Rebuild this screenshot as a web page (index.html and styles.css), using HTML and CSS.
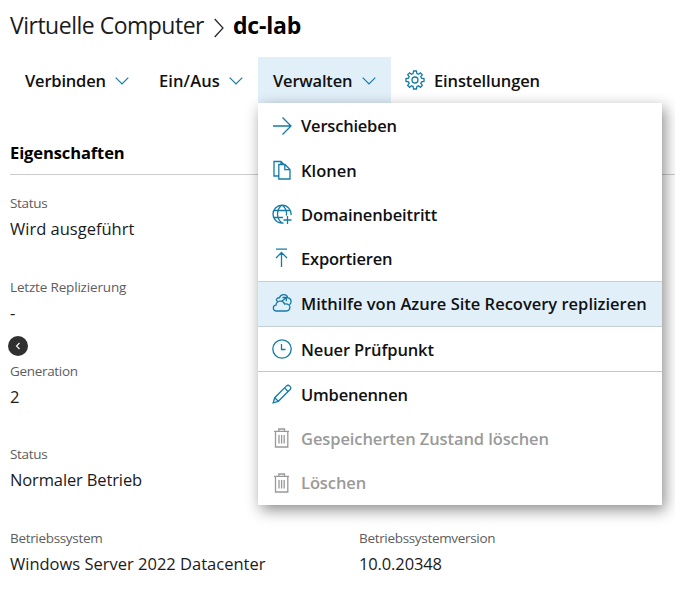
FILE: index.html
```html
<!DOCTYPE html>
<html lang="de">
<head>
<meta charset="utf-8">
<title>dc-lab</title>
<link rel="stylesheet" href="styles.css">
</head>
<body>
<main class="page">
  <header class="crumbs">
    <span class="crumb">Virtuelle Computer</span>
    <svg class="crumb-sep" viewBox="0 0 10 20"><path d="M0.7 1 9 10 0.7 19"/></svg>
    <span class="crumb-current">dc-lab</span>
  </header>
  <nav class="toolbar">
    <div class="tool tool-connect"><span class="snug">Verbinden</span><svg class="chevron" viewBox="0 0 14 8"><path d="M.7.7 7 7 13.300.7"/></svg></div>
    <div class="tool tool-power"><span class="loose">Ein/Aus</span><svg class="chevron" viewBox="0 0 14 8"><path d="M.7.7 7 7 13.300.7"/></svg></div>
    <div class="tool tool-manage"><span class="snug">Verwalten</span><svg class="chevron" viewBox="0 0 14 8"><path d="M.7.7 7 7 13.300.7"/></svg>
      <div class="menu">
        <div class="item"><svg class="icon" viewBox="0 0 20 20"><path d="M1 10H19M10.500 1.500 19 10 10.500 18.500"/></svg><span class="snug">Verschieben</span></div>
        <div class="item"><svg class="icon" viewBox="0 0 20 20"><path d="M6.500 16H2V1.500H9L11.500 4M6.800 4.500H13L18 9.500V19H6.800ZM12.800 4.500V9.700H18M9 1.500V4.500"/></svg><span>Klonen</span></div>
        <div class="item"><svg class="icon" viewBox="0 0 20 20"><path d="M11.500 19A9 9 0 1 1 19 11M10 1C4 5.500 4 14.500 10 19M10 1C14 4 15 8 14.300 11.500M2 6.500H18M2 13.500H11M15.500 12V20M11.500 16H19.500"/></svg><span class="trim">Domainenbeitritt</span></div>
        <div class="item"><svg class="icon" viewBox="0 0 20 20"><path d="M4 1.200H15M9.500 19V4.500M4 10 9.500 4.500 15 10"/></svg><span class="snug">Exportieren</span></div>
        <div class="item item-active"><svg class="icon" viewBox="0 0 20 20"><path d="M4.500 18C.500 18 .300 12.500 4 12.200 4.500 7.500 11 6.700 12.500 11 16.500 10.500 18.300 12.500 17.800 15 17.500 17 16 18 14.500 18ZM5.500 8.500C3.500 7.500 4.500 4.500 7.500 4.800 8.500 .8 15 .5 15.700 4.800 19.800 5 19.800 10 17.500 11.500M9.500 8.500 14 4.800M10.500 4.500H14.300V8.300"/></svg><span>Mithilfe von Azure Site Recovery replizieren</span></div>
        <div class="item item-ruled"><svg class="icon" viewBox="0 0 20 20"><circle cx="10" cy="10" r="9.200"/><path d="M9.500 5V10.500H13.500"/></svg><span class="trim">Neuer Prüfpunkt</span></div>
        <div class="item"><svg class="icon" viewBox="0 0 20 20"><path d="M1.200 18.800 2.700 13.700 14.500 1.900C16.700-.1 20.100 3.300 18.100 5.500L6.300 17.300ZM2.700 13.700 6.300 17.300M12.500 3.900 16.100 7.500"/></svg><span class="snug">Umbenennen</span></div>
        <div class="item item-disabled"><svg class="icon" viewBox="0 0 20 20"><path d="M2 3.300H17M3.500 3.300V19H15.800V3.300M6.800 3.300V1H12.500V3.300M7 7V15.500M9.600 7V15.500M12.200 7V15.500"/></svg><span class="slight">Gespeicherten Zustand löschen</span></div>
        <div class="item item-disabled"><svg class="icon" viewBox="0 0 20 20"><path d="M2 3.300H17M3.500 3.300V19H15.800V3.300M6.800 3.300V1H12.500V3.300M7 7V15.500M9.600 7V15.500M12.200 7V15.500"/></svg><span class="slight">Löschen</span></div>
      </div>
    </div>
    <div class="tool tool-settings"><svg class="icon" viewBox="0 0 20 20"><circle cx="10" cy="10" r="3"/><path d="M8.600 1H11.400L11.900 3.600 13.600 4.300 15.400 2.800 17.300 4.700 15.800 6.600 16.500 8.200 19 8.600V11.400L16.500 11.900 15.800 13.500 17.300 15.400 15.400 17.300 13.500 15.800 11.900 16.500 11.400 19H8.600L8.100 16.500 6.500 15.800 4.600 17.300 2.700 15.400 4.200 13.500 3.500 11.900 1 11.400V8.600L3.500 8.200 4.200 6.600 2.700 4.700 4.600 2.800 6.400 4.300 8.100 3.600Z"/></svg><span class="trim">Einstellungen</span></div>
  </nav>
  <section class="properties">
    <h2 class="heading">Eigenschaften</h2>
    <dl class="fields">
      <div class="field"><dt>Status</dt><dd>Wird ausgeführt</dd></div>
      <div class="field"><dt class="trim">Letzte Replizierung</dt><dd>-</dd>
        <button class="collapse" aria-label="Zurück"><svg viewBox="0 0 6 8"><path d="M4.500 1 1.500 4 4.500 7"/></svg></button></div>
      <div class="field"><dt>Generation</dt><dd>2</dd></div>
      <div class="field"><dt>Status</dt><dd class="trim">Normaler Betrieb</dd></div>
      <div class="field"><dt>Betriebssystem</dt><dd>Windows Server 2022 Datacenter</dd></div>
      <div class="field field-right"><dt>Betriebssystemversion</dt><dd class="trim">10.0.20348</dd></div>
    </dl>
  </section>
</main>
</body>
</html>
```
FILE: styles.css
```css
* { box-sizing: border-box; }
body { margin: 0; background: #fff; color: #1b1b1b; font-family: "Open Sans", "Noto Sans", sans-serif; font-size: 16.5px; }
.page { width: 675px; height: 600px; overflow: hidden; }
svg { fill: none; stroke: #147ba6; stroke-width: 1.3; flex: none; }
span, dt, dd, h2 { white-space: nowrap; }
.crumbs { height: 57px; padding: 0 0 8px 10px; display: flex; align-items: center; font-size: 23px; }
.crumb { width: 194px; letter-spacing: -0.5px; }
.crumb-sep { width: 10px; height: 20px; margin: 6px 9px 0 10px; stroke: #222; stroke-width: 1.2; }
.crumb-current { font-weight: 700; color: #000; letter-spacing: -0.2px; }
.toolbar { display: flex; height: 46px; padding-left: 10px; font-weight: 600; color: #111; }
.tool { display: flex; align-items: center; justify-content: space-between; padding: 0 15px; }
.tool > span { line-height: 46px; margin-top: 2px; }
.tool-connect { width: 134px; }
.tool-power { width: 114px; }
.tool-manage { width: 133px; background: #e1eff9; position: relative; }
.tool-settings { justify-content: flex-start; gap: 9px; padding-left: 14px; }
.chevron { width: 14px; height: 8px; margin-top: 1px; stroke-width: 1.2; }
.icon { width: 20px; height: 20px; }
.menu { position: absolute; left: 0; top: 46px; width: 404px; height: 402px; padding-top: 0.5px; background: #fff; box-shadow: 3px 5px 14px rgba(0,0,0,.45); z-index: 2; }
.item { height: 44.25px; display: flex; align-items: center; gap: 9px; padding-left: 14px; }
.item:nth-child(2) { padding-top: 1px; }
.item-active { height: 46px; background: #e1eff9; border-top: 1.5px solid #c4cfd6; border-bottom: 1px solid #c4cfd6; padding-bottom: 1px; }
.item-ruled { height: 45.5px; border-bottom: 1px solid #bfc9cc; padding-top: 1px; }
.item-disabled { color: #9a9a9a; }
.item-disabled svg { stroke: #999; }
.snug { letter-spacing: -0.2px; }
.trim { letter-spacing: -0.13px; }
.slight { letter-spacing: -0.09px; }
.loose { letter-spacing: 0.1px; }
.properties { padding: 37px 0 0 10px; }
.heading { margin: 0; height: 34.5px; border-bottom: 1px solid #ccc; font-size: 16.5px; line-height: 26px; font-weight: 700; color: #000; letter-spacing: -0.1px; }
.fields { margin: 18.5px 0 0; display: grid; grid-template-columns: 349px 1fr; grid-auto-rows: 83.75px; }
.field { grid-column: 1; position: relative; }
.field-right { grid-column: 2; grid-row: 5; }
dt { font-size: 13.5px; line-height: 20px; color: #5d5d5d; letter-spacing: -0.32px; }
dt.trim { letter-spacing: -0.17px; }
dd { margin: 3px 0 0; line-height: 26px; }
.collapse { position: absolute; left: -2px; top: 59px; width: 20px; height: 20px; border: 0; border-radius: 50%; padding: 0; background: #303030; display: grid; place-items: center; }
.collapse svg { width: 6px; height: 8px; stroke: #fff; stroke-width: 1.1; }
```
